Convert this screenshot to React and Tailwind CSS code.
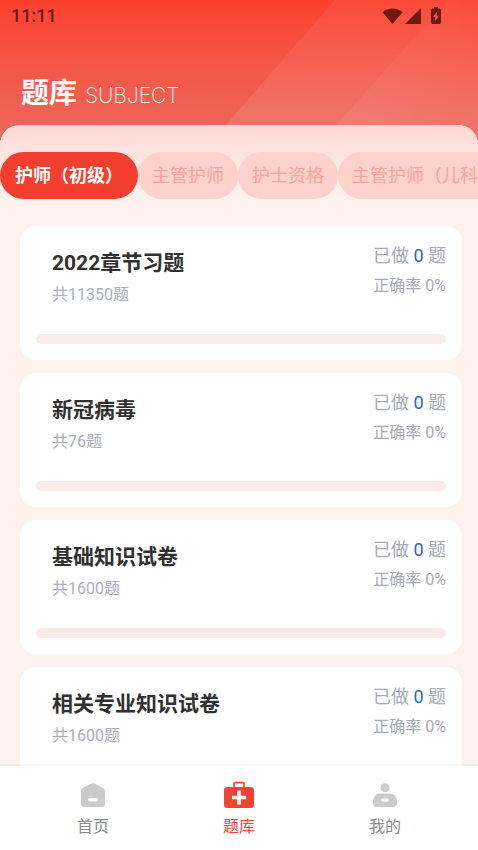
const categories = ['护师（初级）', '主管护师', '护士资格', '主管护师（儿科）'];

const papers = [
  { title: '2022章节习题', total: 11350, done: 0, rate: 0 },
  { title: '新冠病毒', total: 76, done: 0, rate: 0 },
  { title: '基础知识试卷', total: 1600, done: 0, rate: 0 },
  { title: '相关专业知识试卷', total: 1600, done: 0, rate: 0 },
];

function StatusBar() {
  return (
    <div className="flex h-8 items-center justify-between pr-9 pl-[11px] text-[#701a12]">
      <span className="text-lg font-medium">11:11</span>
      <svg width="60" height="18" viewBox="0 0 60 18" fill="currentColor" aria-hidden="true">
        <path d="M0.5 5.2C6 0.2 15 0.2 20.500 5.200L10.500 17Z" />
        <path d="M39 1V17H23Z" />
        <path
          fillRule="evenodd"
          d="M52 0h4v1.500h1.500a1.500 1.500 0 0 1 1.500 1.500V15.500a1.500 1.500 0 0 1-1.500 1.500h-7a1.500 1.500 0 0 1-1.500-1.500V3a1.500 1.500 0 0 1 1.500-1.500H52ZM54.800 4.500L51.300 10h2v4.200L56.800 8.800h-2Z"
        />
      </svg>
    </div>
  );
}

function Header() {
  return (
    <header className="relative h-[150px] shrink-0 bg-linear-to-b from-[#fb412d] to-[#ea6a60]">
      <svg
        className="absolute inset-y-0 right-0 h-full"
        width="256"
        height="150"
        viewBox="0 0 256 150"
        aria-hidden="true"
      >
        <defs>
          <linearGradient id="beam" x1="0" y1="0" x2="0" y2="1">
            <stop offset="0" stopColor="#fff" stopOpacity="0.05" />
            <stop offset="1" stopColor="#fff" stopOpacity="0.11" />
          </linearGradient>
          <linearGradient id="beamEdge" x1="0" y1="0" x2="1" y2="0">
            <stop offset="0" stopColor="#fff" stopOpacity="0.08" />
            <stop offset="1" stopColor="#fff" stopOpacity="0" />
          </linearGradient>
        </defs>
        <path d="M113 0H226L92 150H-18Z" fill="url(#beam)" />
        <path d="M226 0H256V150H92Z" fill="url(#beam)" />
        <path d="M226 0H256V150H92Z" fill="url(#beamEdge)" />
      </svg>
      <div className="relative">
        <StatusBar />
        <h1 className="flex items-baseline gap-2 px-[21px] pt-[42px] text-white">
          <span className="text-[28px] leading-10 font-bold">题库</span>
          <span className="font-[Inter,sans-serif] text-[21px] font-extralight">SUBJECT</span>
        </h1>
      </div>
    </header>
  );
}

function PaperCard({ paper }) {
  return (
    <li className="rounded-2xl bg-white px-4 pt-4 pb-4">
      <div className="flex h-[92px] justify-between pl-4">
        <div className="pt-[5px]">
          <h2 className="text-[21px] leading-8 font-bold text-[#303030]">{paper.title}</h2>
          <p className="text-base leading-8 text-[#aaaebd]">共{paper.total}题</p>
        </div>
        <div className="text-right text-[#a6aab9]">
          <p className="text-lg leading-7">
            已做 <span className="text-[#2b64d6]">{paper.done}</span> 题
          </p>
          <p className="text-base leading-8">正确率 {paper.rate}%</p>
        </div>
      </div>
      <div className="h-[10px] overflow-hidden rounded-full bg-[#faeaea]">
        <div className="h-full bg-[#f64333]" style={{ width: `${paper.rate}%` }} />
      </div>
    </li>
  );
}

function HomeIcon() {
  return (
    <svg width="32" height="30" viewBox="0 0 32 30" aria-hidden="true">
      <path
        d="M14.600 3.600a2.600 2.600 0 0 1 2.800 0L26.500 8.200A3 3 0 0 1 28 10.800V24a3 3 0 0 1-3 3H7a3 3 0 0 1-3-3V10.800a3 3 0 0 1 1.500-2.600Z"
        fill="#cbcbcb"
      />
      <rect x="11" y="18" width="10" height="3.600" rx="1.500" fill="#fff" />
    </svg>
  );
}

function KitIcon() {
  return (
    <svg width="32" height="30" viewBox="0 0 32 30" aria-hidden="true">
      <path d="M11 8V3.600a1 1 0 0 1 1-1h8a1 1 0 0 1 1 1V8" fill="none" stroke="#f04432" strokeWidth="1.600" />
      <rect x="1" y="7" width="30" height="21" rx="3.500" fill="#f04432" />
      <path d="M14.200 10.500h3.600v5.200h5.200v3.600h-5.200v5.200h-3.600v-5.200H9v-3.600h5.200Z" fill="#fff" />
    </svg>
  );
}

function UserIcon() {
  return (
    <svg width="32" height="30" viewBox="0 0 32 30" aria-hidden="true">
      <circle cx="16" cy="7.700" r="4.500" fill="#cbcbcb" />
      <path
        d="M11.500 13.500H20.500C25 13.500 28 17 28 21.500V23A4 4 0 0 1 24 27H8A4 4 0 0 1 4 23V21.500C4 17 7 13.500 11.500 13.500Z"
        fill="#cbcbcb"
      />
      <ellipse cx="16" cy="20" rx="3.900" ry="1.800" fill="#fff" />
    </svg>
  );
}

const tabs = [
  { label: '首页', Icon: HomeIcon },
  { label: '题库', Icon: KitIcon, active: true },
  { label: '我的', Icon: UserIcon },
];

export default function App() {
  return (
    <div className="flex h-screen flex-col overflow-hidden bg-[#fef2ee] font-[Roboto,'Noto_Sans_CJK_SC',sans-serif]">
      <Header />
      <main className="relative -mt-[25px] flex min-h-0 flex-1 flex-col overflow-hidden rounded-t-[20px] bg-[#fef2ee]">
        <div className="shrink-0 bg-linear-to-b from-[#fed9d5] to-[#fef2ee] to-70% pt-[27px] pb-[27px]">
          <div className="flex overflow-x-auto [scrollbar-width:none]">
            {categories.map((name, i) => (
              <button
                key={name}
                type="button"
                className={
                  i === 0
                    ? 'h-[47px] shrink-0 rounded-full bg-[#f53f2e] px-[15px] text-lg font-bold text-white'
                    : 'h-[47px] shrink-0 rounded-full bg-[#fdd1cc] px-[14px] text-lg text-[#f4a59d]'
                }
              >
                {name}
              </button>
            ))}
          </div>
        </div>
        <ul className="flex min-h-0 flex-1 flex-col gap-[13px] overflow-y-auto pr-4 pl-5 [scrollbar-width:none]">
          {papers.map((paper) => (
            <PaperCard key={paper.title} paper={paper} />
          ))}
        </ul>
      </main>
      <nav className="relative flex h-[84px] shrink-0 bg-white px-5 pt-[14px] shadow-[0_-1px_3px_rgba(0,0,0,0.06)]">
        {tabs.map(({ label, Icon, active }) => (
          <a
            key={label}
            href="#"
            className={
              active
                ? 'flex flex-1 flex-col items-center text-base leading-[34px] text-[#e9493a]'
                : 'flex flex-1 flex-col items-center text-base leading-[34px] text-[#8c8c8c]'
            }
          >
            <Icon />
            {label}
          </a>
        ))}
      </nav>
    </div>
  );
}
